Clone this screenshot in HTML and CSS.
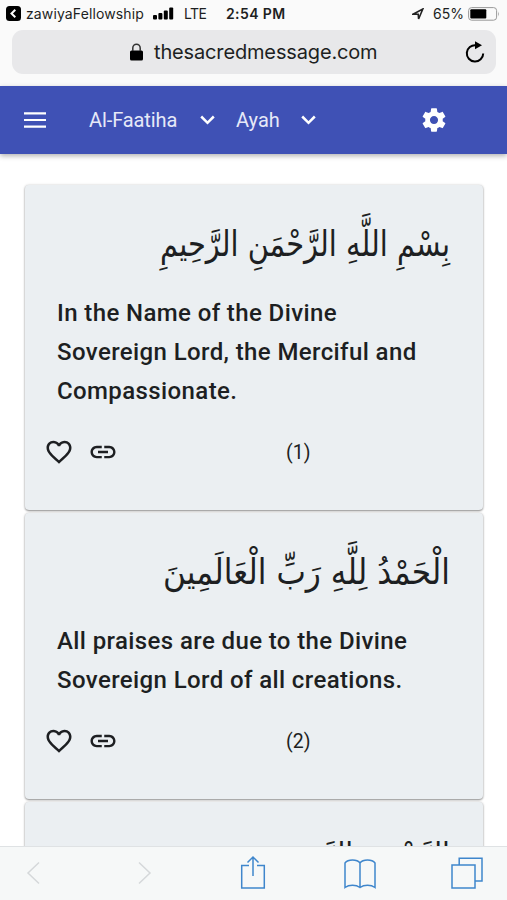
FILE: index.html
```html
<!DOCTYPE html>
<html lang="en">

<head>
  <meta charset="utf-8">
  <title>The Sacred Message</title>
  <link rel="stylesheet" href="styles.css">
</head>

<body>

  <!-- Status bar -->
  <div class="status">
    <svg class="back-app" viewBox="0 0 15 15"><rect width="15" height="15" rx="3.5" /><path d="M9.3 3.8 L5.5 7.5 L9.3 11.2" /></svg>
    <span class="app-name">zawiyaFellowship</span>
    <svg class="signal" viewBox="0 0 21 13">
      <rect x="0" y="8" width="4" height="4.5" rx="1" />
      <rect x="5.4" y="6" width="4" height="6.5" rx="1" />
      <rect x="10.8" y="3.5" width="4" height="9" rx="1" />
      <rect x="16.2" y="0.5" width="4" height="12" rx="1" />
    </svg>
    <span class="carrier">LTE</span>
    <span class="clock">2:54 PM</span>
    <svg class="location" viewBox="0 0 12 12"><path d="M1 6.2 L10.8 1 L6.6 11 L6.2 6.3 Z" /></svg>
    <span class="percent">65%</span>
    <svg class="battery" viewBox="0 0 32 14">
      <rect class="shell" x="0.6" y="0.6" width="28" height="12.6" rx="3" />
      <rect x="2.3" y="2.3" width="16" height="9.3" rx="1" />
      <path class="cap" d="M30 4.5 Q31.6 7 30 9.5 Z" />
    </svg>
  </div>

  <div class="address">
    <svg class="lock" viewBox="0 0 13 18"><rect x="0" y="7.5" width="13" height="10" rx="1.5" /><path d="M2.8 8 V5 a3.7 3.7 0 0 1 7.4 0 V8" /></svg>
    <span class="url">thesacredmessage.com</span>
    <svg class="reload" viewBox="0 0 20 22"><path class="arc" d="M11 4.2 A8.2 8.2 0 1 0 18.2 12.4" /><path d="M10 0.3 L17 4.3 L10 8.3 Z" /></svg>
  </div>

  <!-- App bar -->
  <div class="navbar">
    <svg class="menu-icon" viewBox="0 0 22 16"><path d="M0 1.3 H22 M0 8 H22 M0 14.7 H22" /></svg>
    <span class="select surah">Al-Faatiha</span>
    <svg class="chevron" viewBox="0 0 15 10"><path d="M1.2 1.5 L7.5 7.8 L13.8 1.5" /></svg>
    <span class="select ayah">Ayah</span>
    <svg class="chevron" viewBox="0 0 15 10"><path d="M1.2 1.5 L7.5 7.8 L13.8 1.5" /></svg>
    <svg class="gear" viewBox="0 0 24 24"><path d="M19.43 12.98c.04-.32.07-.64.07-.98s-.03-.66-.07-.98l2.11-1.65c.19-.15.24-.42.12-.64l-2-3.46c-.12-.22-.39-.3-.61-.22l-2.49 1c-.52-.4-1.08-.73-1.69-.98l-.38-2.65C14.46 2.18 14.25 2 14 2h-4c-.25 0-.46.18-.49.42l-.38 2.65c-.61.25-1.17.59-1.69.98l-2.49-1c-.23-.09-.49 0-.61.22l-2 3.46c-.13.22-.07.49.12.64l2.11 1.65c-.04.32-.07.65-.07.98s.03.66.07.98l-2.11 1.65c-.19.15-.24.42-.12.64l2 3.46c.12.22.39.3.61.22l2.49-1c.52.4 1.08.73 1.69.98l.38 2.65c.03.24.24.42.49.42h4c.25 0 .46-.18.49-.42l.38-2.65c.61-.25 1.17-.59 1.69-.98l2.49 1c.23.09.49 0 .61-.22l2-3.46c.12-.22.07-.49-.12-.64l-2.11-1.65zM12 15.5c-1.93 0-3.5-1.57-3.5-3.5s1.57-3.5 3.5-3.5 3.5 1.57 3.5 3.5-1.57 3.5-3.5 3.5z" /></svg>
  </div>

  <!-- Verses -->
  <div class="verses">
    <div class="card">
      <svg class="arabic" viewBox="0 0 393 80" direction="rtl" lang="ar"><text x="393" y="42" textLength="290" lengthAdjust="spacingAndGlyphs">بِسْمِ اللَّهِ الرَّحْمَنِ الرَّحِيمِ</text></svg>
      <p class="translation">In the Name of the Divine Sovereign Lord, the Merciful and Compassionate.</p>
      <div class="actions">
        <svg class="icon" viewBox="0 0 24 24"><path d="M16.5 3c-1.74 0-3.41.81-4.5 2.09C10.91 3.81 9.24 3 7.5 3 4.42 3 2 5.42 2 8.5c0 3.78 3.4 6.86 8.55 11.54L12 21.35l1.45-1.32C18.6 15.36 22 12.28 22 8.5 22 5.42 19.58 3 16.5 3zm-4.4 15.55l-.1.1-.1-.1C7.14 14.24 4 11.39 4 8.5 4 6.5 5.5 5 7.5 5c1.54 0 3.04.99 3.57 2.36h1.87C13.46 5.99 14.96 5 16.5 5c2 0 3.5 1.5 3.5 3.5 0 2.89-3.14 5.74-7.9 10.05z" /></svg>
        <svg class="icon" viewBox="0 0 24 24"><path d="M3.9 12c0-1.71 1.39-3.1 3.1-3.1h4V7H7c-2.76 0-5 2.24-5 5s2.24 5 5 5h4v-1.9H7c-1.71 0-3.1-1.39-3.1-3.1zM8 13h8v-2H8v2zm9-6h-4v1.9h4c1.71 0 3.1 1.39 3.1 3.1s-1.39 3.1-3.1 3.1h-4V17h4c2.76 0 5-2.24 5-5s-2.24-5-5-5z" /></svg>
        <span class="number">(1)</span>
      </div>
    </div>

    <div class="card">
      <svg class="arabic" viewBox="0 0 393 80" direction="rtl" lang="ar"><text x="393" y="42" textLength="287" lengthAdjust="spacingAndGlyphs">الْحَمْدُ لِلَّهِ رَبِّ الْعَالَمِينَ</text></svg>
      <p class="translation">All praises are due to the Divine Sovereign Lord of all creations.</p>
      <div class="actions">
        <svg class="icon" viewBox="0 0 24 24"><path d="M16.5 3c-1.74 0-3.41.81-4.5 2.09C10.91 3.81 9.24 3 7.5 3 4.42 3 2 5.42 2 8.5c0 3.78 3.4 6.86 8.55 11.54L12 21.35l1.45-1.32C18.6 15.36 22 12.28 22 8.5 22 5.42 19.58 3 16.5 3zm-4.4 15.55l-.1.1-.1-.1C7.14 14.24 4 11.39 4 8.5 4 6.5 5.5 5 7.5 5c1.54 0 3.04.99 3.57 2.36h1.87C13.46 5.99 14.96 5 16.5 5c2 0 3.5 1.5 3.5 3.5 0 2.89-3.14 5.74-7.9 10.05z" /></svg>
        <svg class="icon" viewBox="0 0 24 24"><path d="M3.9 12c0-1.71 1.39-3.1 3.1-3.1h4V7H7c-2.76 0-5 2.24-5 5s2.24 5 5 5h4v-1.9H7c-1.71 0-3.1-1.39-3.1-3.1zM8 13h8v-2H8v2zm9-6h-4v1.9h4c1.71 0 3.1 1.39 3.1 3.1s-1.39 3.1-3.1 3.1h-4V17h4c2.76 0 5-2.24 5-5s-2.24-5-5-5z" /></svg>
        <span class="number">(2)</span>
      </div>
    </div>

    <div class="card">
      <svg class="arabic" viewBox="0 0 393 80" direction="rtl" lang="ar"><text x="393" y="37" textLength="174" lengthAdjust="spacingAndGlyphs">الرَّحْمَنِ الرَّحِيمِ</text></svg>
    </div>
  </div>

  <!-- Browser toolbar -->
  <div class="toolbar">
    <svg class="tool off" viewBox="0 0 32 36"><path d="M20 7.5 L9 18 L20 28.5" /></svg>
    <svg class="tool off" viewBox="0 0 32 36"><path d="M11 7.5 L22 18 L11 28.5" /></svg>
    <svg class="tool" viewBox="0 0 32 36"><path d="M12 10.5 H4.7 V33 H27.3 V10.5 H20 M16 21 V2 M10.5 7.5 L16 2 L21.5 7.5" /></svg>
    <svg class="tool" viewBox="0 0 32 36"><path d="M16 8 C13 4 4 4 1 8 V32.5 C5 29.5 12 29.5 16 32.5 C20 29.5 27 29.5 31 32.5 V8 C28 4 19 4 16 8 V32.5" /></svg>
    <svg class="tool" viewBox="0 0 32 36"><path d="M1 10 H24 V33 H1 Z M8.2 10 V3.3 H31 V26 H24" /></svg>
  </div>

</body>

</html>
```

FILE: styles.css
```css
* {
  box-sizing: border-box;
}

body {
  margin: 0;
  height: 900px;
  display: flex;
  flex-direction: column;
  background-color: #fafafa;
  font-family: Roboto, "Liberation Sans", sans-serif;
  color: #1d1f22;
  overflow: hidden;
}

svg {
  flex: none;
  display: block;
}

/* status bar */
.status {
  height: 30px;
  padding: 0 8px 3px 6px;
  display: flex;
  align-items: center;
  font-family: Inter, sans-serif;
  font-size: 14px;
  white-space: nowrap;
}

.back-app {
  width: 15px;
  height: 15px;
}

.back-app path {
  fill: none;
  stroke: #fff;
  stroke-width: 2;
}

.app-name {
  width: 119px;
  margin-left: 5px;
  letter-spacing: 0.12px;
}

.signal {
  width: 21px;
  height: 13px;
  margin-left: 8px;
}

.carrier {
  width: 42px;
  margin-left: 10px;
  letter-spacing: -0.5px;
}

.clock {
  font-weight: 600;
  letter-spacing: 0.4px;
}

.location {
  width: 12px;
  height: 12px;
  margin-left: auto;
  fill: none;
  stroke: #222;
  stroke-width: 1.6;
}

.percent {
  margin: 0 4px 0 9px;
}

.battery {
  width: 32px;
  height: 14px;
  margin-right: -1px;
}

.battery .shell {
  fill: none;
  stroke: #999;
}

.battery .cap {
  fill: #999;
}

/* address bar */
.address {
  height: 44px;
  margin: 0 11px 12px 12px;
  padding: 0 11px 0 118px;
  display: flex;
  align-items: center;
  border-radius: 11px;
  background-color: #e8e8ea;
  font-family: Inter, sans-serif;
  font-size: 20px;
}

.lock {
  width: 13px;
  height: 18px;
}

.lock path {
  fill: none;
  stroke: #333;
  stroke-width: 1.5;
}

.url {
  margin-left: 11px;
  letter-spacing: -0.15px;
}

.reload {
  width: 20px;
  height: 22px;
  margin-left: auto;
}

.reload .arc {
  fill: none;
  stroke: #000;
  stroke-width: 2;
}

/* app bar */
.navbar {
  flex: none;
  height: 68px;
  padding-left: 24px;
  display: flex;
  align-items: center;
  background-color: #3f51b5;
  color: #e6e9f8;
  font-size: 20px;
  box-shadow: 0 2px 5px rgba(0, 0, 0, 0.3);
  z-index: 1;
}

.menu-icon {
  width: 22px;
  height: 16px;
  margin-right: 43px;
  stroke: #fff;
  stroke-width: 2.2;
}

.surah {
  width: 111px;
  letter-spacing: -0.1px;
}

.chevron {
  width: 15px;
  height: 10px;
  fill: none;
  stroke: #fff;
  stroke-width: 2.5;
}

.ayah {
  width: 65px;
  margin-left: 21px;
}

.gear {
  width: 28px;
  height: 28px;
  margin-left: 104px;
  fill: #fff;
}

/* verses */
.verses {
  flex: 1;
  min-height: 0;
  padding: 31px 24px 0 25px;
  background-color: #fff;
  overflow: hidden;
}

.card {
  margin-bottom: 3px;
  padding: 29px 33px 42px 32px;
  border-radius: 4px;
  background-color: #ebeff2;
  box-shadow: 0 1px 2px rgba(0, 0, 0, 0.4), 0 0 3px rgba(0, 0, 0, 0.15);
}

.arabic {
  width: 393px;
  height: 80px;
  overflow: visible;
  font-family: "DejaVu Sans", sans-serif;
  font-size: 35px;
  fill: #1d1f22;
}

.translation {
  margin: 0;
  font-size: 24px;
  font-weight: 500;
  line-height: 39px;
  letter-spacing: 0.39px;
}

.actions {
  height: 30px;
  margin-top: 26px;
  margin-bottom: 1px;
  margin-left: -13px;
  display: flex;
  align-items: center;
}

.icon {
  width: 30px;
  height: 30px;
  margin-right: 14px;
  fill: #1d1f22;
}

.number {
  margin-left: 154px;
  font-size: 19.5px;
}

/* browser toolbar */
.toolbar {
  flex: none;
  height: 54px;
  padding-left: 19px;
  display: flex;
  gap: 75px;
  background-color: #f6f8f8;
  border-top: 1px solid #dfe2e4;
}

.tool {
  width: 32px;
  height: 36px;
  margin-top: 8px;
  fill: none;
  stroke: #3f86cc;
  stroke-width: 1.5;
}

.tool.off {
  margin-right: 2px;
  stroke: #d5d8da;
}
```
